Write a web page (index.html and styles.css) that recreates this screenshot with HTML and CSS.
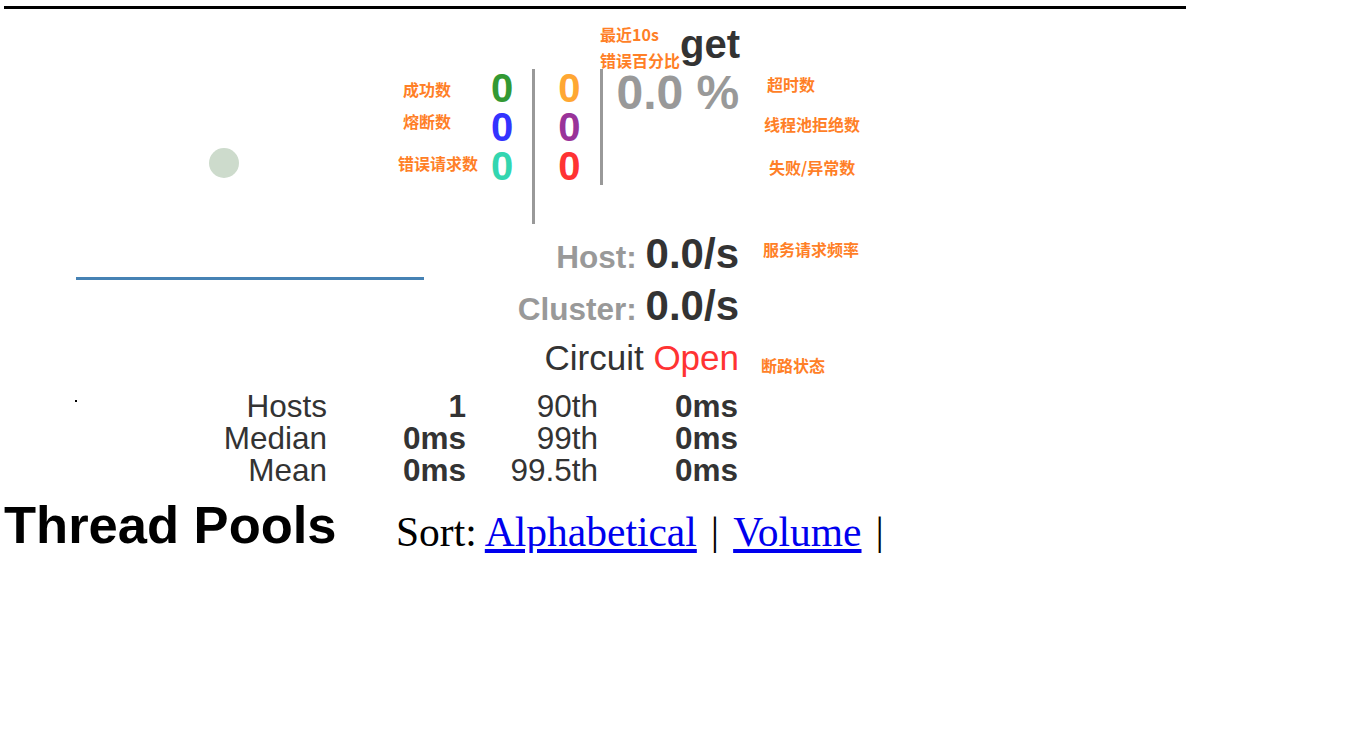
FILE: index.html
```html
<!DOCTYPE html>
<html lang="zh">
<head>
<meta charset="utf-8">
<title>Hystrix Stream Monitor</title>
<link rel="stylesheet" href="styles.css">
</head>
<body>
<div class="monitor">
  <svg class="chart" width="440" height="400" viewBox="0 0 440 400" aria-hidden="true">
    <circle cx="220" cy="154" r="15" fill="#cddbcc"/>
    <line x1="72" y1="269.5" x2="420" y2="269.5" stroke="#4682b4" stroke-width="3"/>
    <rect x="71" y="391" width="2" height="2" fill="#000"/>
  </svg>
  <div class="grid">
    <div class="main head">
      <div class="note-stack">
        <span class="note">最近10s</span>
        <span class="note">错误百分比</span>
      </div>
      <div class="name">get</div>
    </div>
    <div class="side"></div>

    <div class="main counters">
      <div class="clabels">
        <span class="note l1">成功数</span>
        <span class="note l2">熔断数</span>
        <span class="note l3">错误请求数</span>
      </div>
      <div class="ccol col-a">
        <span class="c-success">0</span>
        <span class="c-short">0</span>
        <span class="c-bad">0</span>
      </div>
      <div class="vsep long"></div>
      <div class="ccol col-b">
        <span class="c-timeout">0</span>
        <span class="c-rejected">0</span>
        <span class="c-failure">0</span>
      </div>
      <div class="vsep short"></div>
      <div class="errpct">0.0 %</div>
    </div>
    <div class="side counter-notes">
      <span class="note n-timeout">超时数</span>
      <span class="note n-rejected">线程池拒绝数</span>
      <span class="note n-failure">失败/异常数</span>
    </div>

    <div class="main rates">
      <div class="rate"><span class="rlabel">Host: </span>0.0/s</div>
      <div class="rate"><span class="rlabel">Cluster: </span>0.0/s</div>
      <div class="circuit">Circuit <span class="open">Open</span></div>
    </div>
    <div class="side rate-notes">
      <span class="note n-rate">服务请求频率</span>
      <span class="note n-circuit">断路状态</span>
    </div>

    <div class="main latency">
      <span class="lk">Hosts</span><span class="lv">1</span><span class="lk">90th</span><span class="lv">0ms</span>
      <span class="lk">Median</span><span class="lv">0ms</span><span class="lk">99th</span><span class="lv">0ms</span>
      <span class="lk">Mean</span><span class="lv">0ms</span><span class="lk">99.5th</span><span class="lv">0ms</span>
    </div>
    <div class="side"></div>
  </div>
</div>

<div class="pools">
  <h2 class="pools-title">Thread Pools</h2>
  <div class="sort">Sort: <a href="#">Alphabetical</a><span class="bar">|</span><a href="#">Volume</a><span class="bar">|</span></div>
</div>
</body>
</html>
```

FILE: styles.css
```css
* { box-sizing: border-box; }

html, body {
  margin: 0;
  background: #fff;
}

body {
  font-family: "Liberation Sans", Arial, sans-serif;
  color: #333;
}

.monitor {
  position: relative;
  width: 1182px;
  margin: 6px 0 0 4px;
  border-top: 3px solid #000;
}

.chart {
  position: absolute;
  left: 0;
  top: 0;
}

.grid {
  position: relative;
  display: grid;
  grid-template-columns: 735px 1fr;
  column-gap: 22px;
}

.note {
  display: block;
  font-family: "Noto Sans CJK SC", "Noto Sans", sans-serif;
  font-weight: 700;
  font-size: 16px;
  line-height: 26px;
  color: #ff7f27;
  white-space: nowrap;
}

/* header */
.head {
  height: 60px;
  display: flex;
  align-items: flex-start;
  padding-left: 596px;
}

.note-stack { margin-top: 12px; }

.name {
  margin-top: 15px;
  font-size: 40px;
  line-height: 40px;
  font-weight: 700;
  color: #333;
}

/* counters */
.counters {
  display: flex;
  align-items: flex-start;
  height: 155px;
}

.counters > * { flex-shrink: 0; }

.clabels {
  width: 474px;
  padding: 7px 0 0 399px;
}

.clabels .l2 { margin-top: 6px; }
.clabels .l3 { margin: 16px 0 0 -5px; }

.ccol {
  display: flex;
  flex-direction: column;
  font-size: 40px;
  line-height: 39px;
  font-weight: 700;
}

.col-a { margin-left: 13px; }
.col-b { margin-left: 23px; }

.c-success { color: #339933; }
.c-short { color: #3333ff; }
.c-bad { color: #33d6b0; }
.c-timeout { color: #ffa733; }
.c-rejected { color: #993399; }
.c-failure { color: #ff3333; }

.vsep {
  width: 3px;
  margin-left: 19px;
  background: #999;
}

.vsep.long { height: 155px; }
.vsep.short { height: 116px; }

.errpct {
  margin-left: 14px;
  font-size: 48px;
  line-height: 48px;
  font-weight: 700;
  color: #999;
  white-space: nowrap;
}

.counter-notes { padding-top: 2px; }
.n-timeout { padding-left: 6px; }
.n-rejected { margin-top: 14px; padding-left: 3px; }
.n-failure { margin-top: 17px; padding-left: 8px; }

/* rates */
.rates {
  padding-top: 4px;
  text-align: right;
}

.rate {
  font-size: 42px;
  line-height: 52px;
  font-weight: 700;
  color: #333;
  white-space: nowrap;
}

.rlabel {
  font-size: 31.5px;
  line-height: 1;
  color: #999;
}

.circuit {
  padding-top: 1px;
  font-size: 35px;
  line-height: 50px;
  color: #333;
  white-space: nowrap;
}

.open { color: #ff3333; }

.rate-notes { padding-top: 12px; }
.n-rate { padding-left: 2px; }
.n-circuit { margin-top: 90px; }

/* latency table */
.latency {
  display: grid;
  grid-template-columns: 323px 139px 132px 140px;
  margin-top: 7px;
  font-size: 31.5px;
  line-height: 32px;
  text-align: right;
  color: #333;
}

.latency .lv { font-weight: 700; }

/* thread pools */
.pools {
  display: flex;
  align-items: flex-start;
  margin: 13px 0 0 4px;
}

.pools-title {
  flex: 0 0 392px;
  margin: 0;
  font-family: "Liberation Sans", Arial, sans-serif;
  font-weight: 700;
  font-size: 52.5px;
  line-height: 52px;
  color: #000;
}

.sort {
  margin-top: 12px;
  font-family: "Liberation Serif", "Times New Roman", serif;
  font-size: 41.5px;
  line-height: 42px;
  color: #000;
  white-space: nowrap;
}

.sort a {
  color: #0000ee;
  text-decoration: underline;
}

.bar { padding: 0 14px; }
```
